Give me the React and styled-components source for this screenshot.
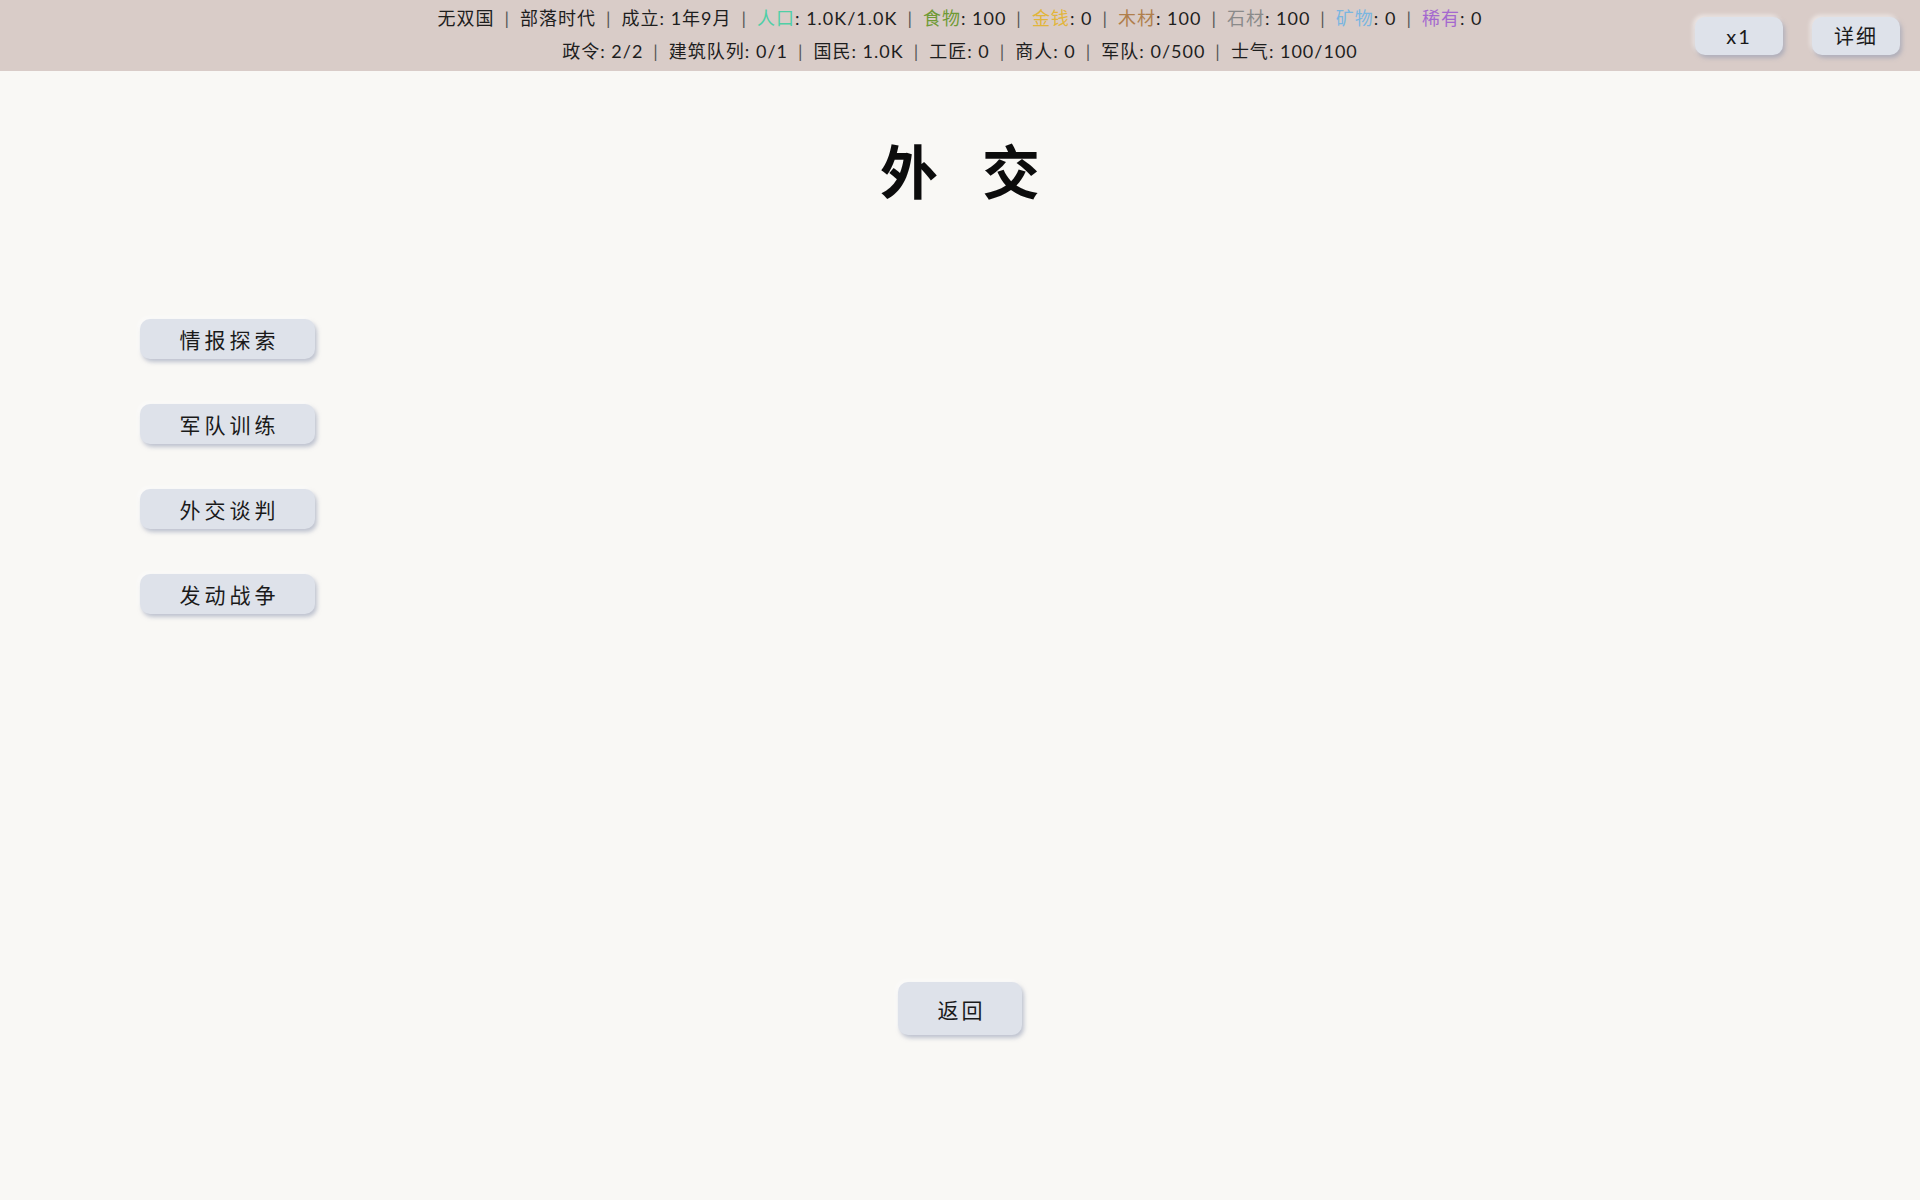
import React from 'react';
import styled, { createGlobalStyle } from 'styled-components';

const GlobalStyle = createGlobalStyle`
    html, body {
        margin: 0;
        padding: 0;
        background: #f9f8f5;
    }
    body {
        font-family: "Lato", "Noto Sans CJK SC", sans-serif;
        color: #1e1e1e;
    }
`;

const Page = styled.div`
    width: 1920px;
    height: 1200px;
    display: flex;
    flex-direction: column;
    background: #f9f8f5;
    overflow: hidden;
`;

const Header = styled.header`
    height: 71px;
    background: #d9ccc8;
    display: grid;
    grid-template-columns: 1fr auto 1fr;
    align-items: center;
    padding: 0 20px;
    box-sizing: border-box;
`;

const Stats = styled.div`
    grid-column: 2;
    display: flex;
    flex-direction: column;
    align-items: center;
    font-size: 18px;
    line-height: 33px;
    letter-spacing: 1px;
    padding-bottom: 2px;
    white-space: nowrap;
`;

const Line = styled.div`
    display: flex;
`;

const Sep = styled.span`
    color: #555;
    margin: 0 10px;
`;

const Label = styled.span`
    color: ${p => p.color || 'inherit'};
`;

const HeaderActions = styled.div`
    grid-column: 3;
    display: flex;
    justify-content: flex-end;
    gap: 29px;
`;

const Button = styled.button`
    border: none;
    background: #dee2ea;
    border-radius: 10px;
    font-family: "Lato", "Noto Sans CJK SC", sans-serif;
    color: #1a1a1a;
    cursor: pointer;
    box-shadow: 2px 3px 4px rgba(140, 150, 175, 0.55), -2px -2px 4px rgba(255, 255, 255, 0.55);
`;

const TopButton = styled(Button)`
    width: 88px;
    height: 38px;
    font-size: 20px;
    letter-spacing: 2px;
`;

const Title = styled.h1`
    margin: 69px 0 0;
    text-align: center;
    font-family: "Noto Sans CJK SC", sans-serif;
    font-size: 58px;
    line-height: 1;
    font-weight: 700;
    letter-spacing: 44px;
    text-indent: 44px;
    color: #0c0c0c;
`;

const Menu = styled.nav`
    display: flex;
    flex-direction: column;
    align-items: flex-start;
    gap: 45px;
    margin-top: 121px;
    padding-left: 140px;
`;

const MenuButton = styled(Button)`
    width: 175px;
    height: 40px;
    font-size: 21px;
    letter-spacing: 4px;
    text-indent: 4px;
`;

const Footer = styled.div`
    display: flex;
    justify-content: center;
    margin-top: 368px;
`;

const BackButton = styled(Button)`
    width: 124px;
    height: 53px;
    font-size: 21px;
    letter-spacing: 3px;
    text-indent: 3px;
`;

const line1 = [
    ['无双国'],
    ['部落时代'],
    ['成立', '1年9月'],
    ['人口', '1.0K/1.0K', '#4fcfa6'],
    ['食物', '100', '#6f9a35'],
    ['金钱', '0', '#e2b53a'],
    ['木材', '100', '#b07f4c'],
    ['石材', '100', '#8a8a8a'],
    ['矿物', '0', '#7ab6e0'],
    ['稀有', '0', '#a468cf'],
];

const line2 = [
    ['政令', '2/2'],
    ['建筑队列', '0/1'],
    ['国民', '1.0K'],
    ['工匠', '0'],
    ['商人', '0'],
    ['军队', '0/500'],
    ['士气', '100/100'],
];

const StatLine = ({ items }) => (
    <Line>
        {items.map(([label, value, color], i) => (
            <React.Fragment key={label}>
                {i > 0 && <Sep>|</Sep>}
                <span>
                    <Label color={color}>{label}</Label>
                    {value !== undefined && `: ${value}`}
                </span>
            </React.Fragment>
        ))}
    </Line>
);

const menu = ['情报探索', '军队训练', '外交谈判', '发动战争'];

export default function App() {
    return (
        <Page>
            <GlobalStyle />
            <Header>
                <Stats>
                    <StatLine items={line1} />
                    <StatLine items={line2} />
                </Stats>
                <HeaderActions>
                    <TopButton>x1</TopButton>
                    <TopButton>详细</TopButton>
                </HeaderActions>
            </Header>
            <Title>外交</Title>
            <Menu>
                {menu.map(m => (
                    <MenuButton key={m}>{m}</MenuButton>
                ))}
            </Menu>
            <Footer>
                <BackButton>返回</BackButton>
            </Footer>
        </Page>
    );
}
